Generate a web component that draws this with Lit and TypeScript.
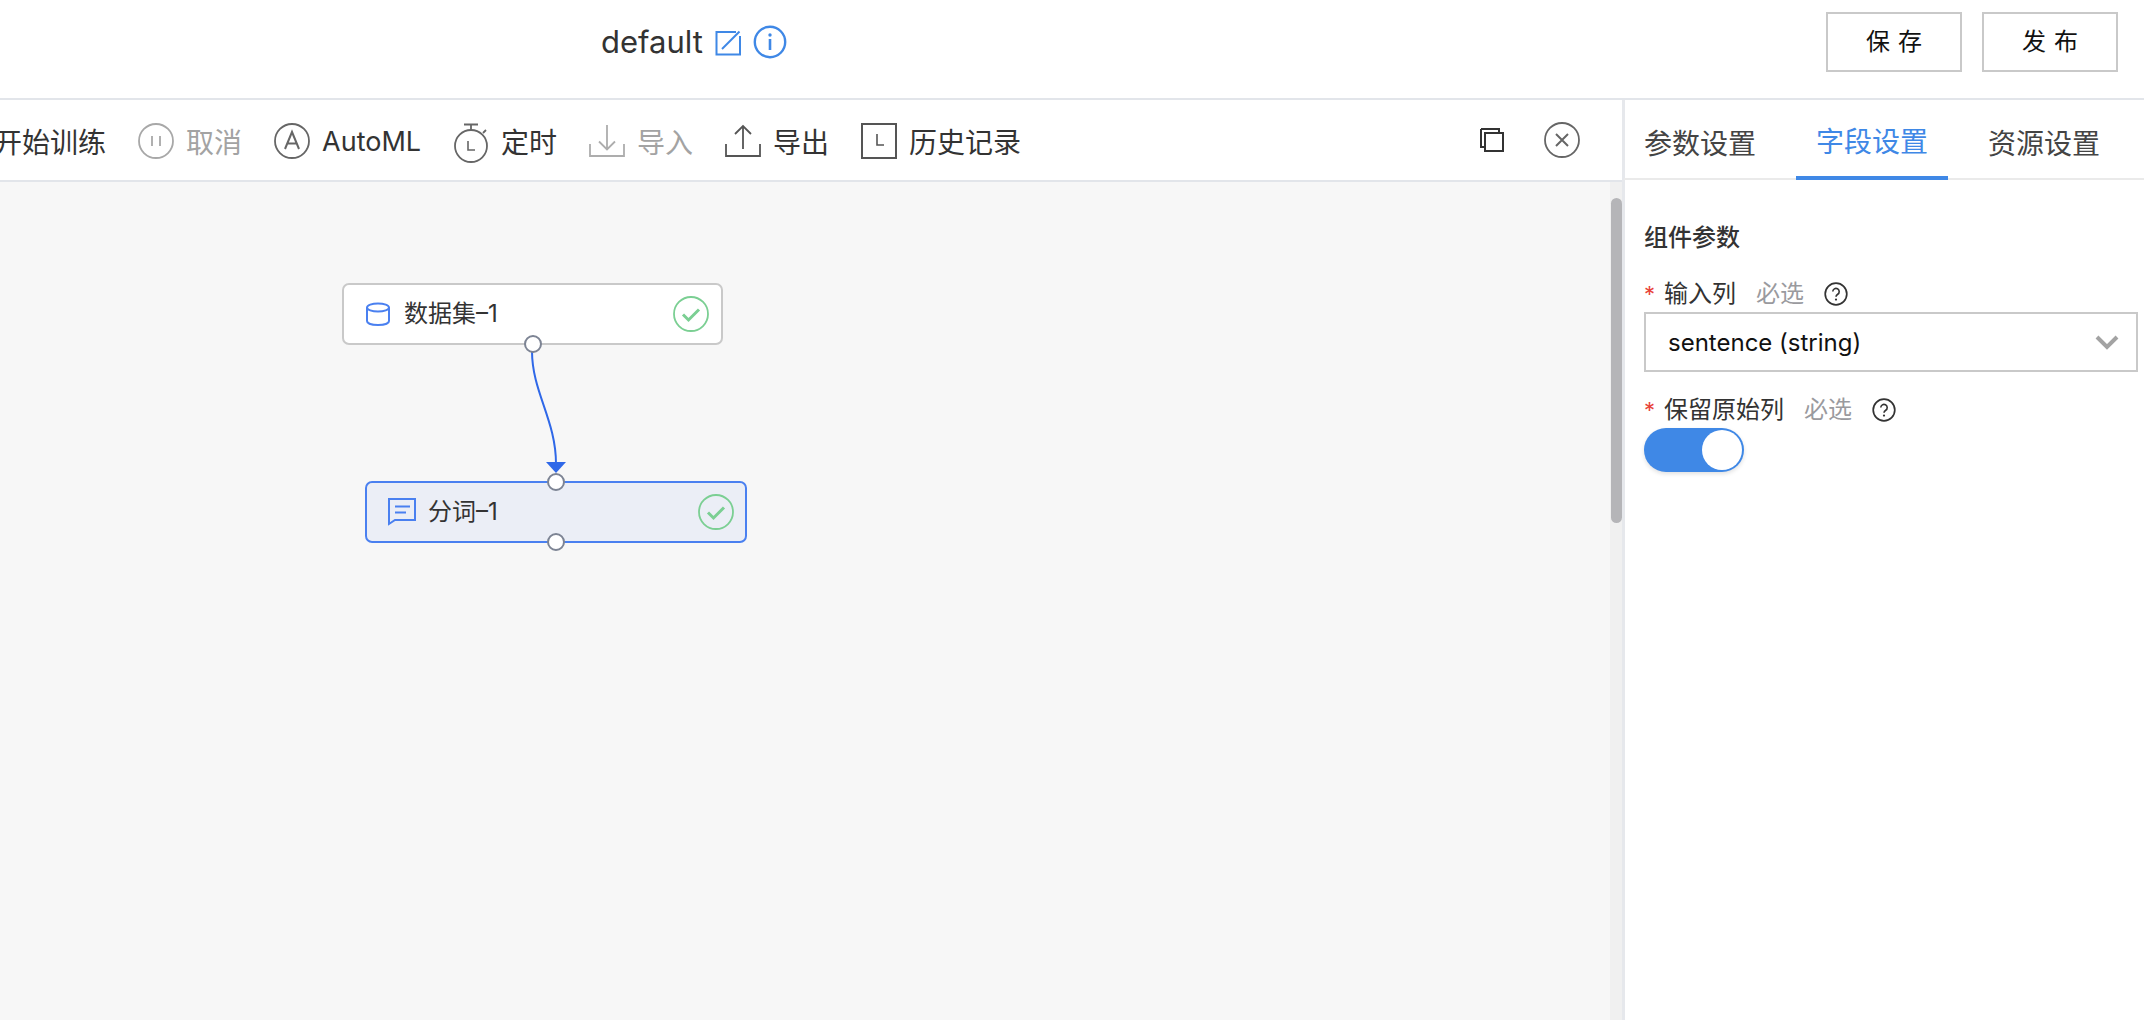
import { LitElement, html, css, svg } from "lit";
import { customElement } from "lit/decorators.js";

const check = svg`<svg class="check" viewBox="0 0 36 36"><circle cx="18" cy="18" r="17" fill="none" stroke="#7bcf93" stroke-width="1.8"/><path d="M10 18.500l5.500 5.500 10.500-10.500" fill="none" stroke="#7bcf93" stroke-width="3"/></svg>`;
const help = svg`<svg class="help" viewBox="0 0 24 24"><circle cx="12" cy="12" r="10.8" fill="none" stroke="#333" stroke-width="1.7"/><path d="M8.8 9.6a3.2 3.2 0 1 1 4.9 2.7c-1.100.7-1.700 1.200-1.700 2.500" fill="none" stroke="#333" stroke-width="1.600"/><circle cx="12" cy="17.600" r="1.100" fill="#333"/></svg>`;

@customElement("app-root")
export class AppRoot extends LitElement {
  static styles = css`
    :host { display: block; width: 2144px; height: 1020px; overflow: hidden; background: #fff; color: #333; font-family: Inter, "Noto Sans CJK SC", sans-serif; }
    .header { height: 84px; padding: 0 26px 14px 601px; border-bottom: 2px solid #e2e5ea; display: flex; align-items: center; }
    .title { font-size: 31px; color: #333; margin-right: 12px; padding-bottom: 2px; }
    .edit { width: 26px; height: 26px; margin-right: 12px; margin-top: 2px; }
    .info { width: 34px; height: 34px; margin-top: -1px; }
    .actions { margin-left: auto; display: flex; gap: 20px; }
    .btn { width: 136px; height: 60px; box-sizing: border-box; border: 2px solid #c9c9c9; padding-bottom: 5px; display: flex; align-items: center; justify-content: center; font-size: 24px; letter-spacing: 8px; text-indent: 8px; color: #111; background: #fff; }
    .body { display: flex; height: 920px; }
    .left { width: 1622px; display: flex; flex-direction: column; }
    .toolbar { height: 80px; border-bottom: 2px solid #e2e5ea; display: flex; align-items: center; font-size: 28px; color: #333; }
    .tools { display: flex; align-items: center; gap: 32px; margin-left: -6px; padding-top: 2px; }
    .tool { display: flex; align-items: center; gap: 12px; }
    .tool.off { color: #a3a3a3; }
    .tool svg { width: 36px; height: 36px; flex: none; }
    .tool.timer svg { height: 40px; margin-top: 4px; }
    .latin { font-size: 27px; }
    .tool-right { margin-left: auto; display: flex; align-items: center; gap: 40px; padding-right: 42px; }
    .tool-right svg { display: block; }
    .copy { width: 24px; height: 24px; }
    .close { width: 36px; height: 36px; }
    .canvas { flex: 1; position: relative; background: #f7f7f7; overflow: hidden; }
    .track { position: absolute; right: 0; top: 0; bottom: 0; width: 12px; background: #f0f0f0; }
    .thumb { position: absolute; left: 1px; right: 0; top: 16px; height: 325px; border-radius: 6px; background: #b5b5b8; }
    .link { position: absolute; left: 0; top: 0; width: 800px; height: 500px; }
    .node { position: absolute; height: 62px; box-sizing: border-box; border-radius: 7px; border: 2px solid #c9c9c9; background: #fff; display: flex; align-items: center; font-size: 24px; color: #333; }
    .node.sel { border-color: #4a80f0; background: #ebeef6; }
    .node .ic { flex: none; margin-left: 22px; margin-right: 14px; }
    .node .ic.chat { margin-left: 21px; margin-right: 12px; }
    .node .txt { padding-bottom: 6px; }
    .n1 { left: 342px; top: 101px; width: 381px; }
    .n2 { left: 365px; top: 299px; width: 382px; }
    .check { width: 36px; height: 36px; margin-left: auto; margin-right: 11px; flex: none; }
    .port { position: absolute; width: 14px; height: 14px; left: 180px; border: 2px solid #7d8494; border-radius: 50%; background: #fff; z-index: 1; }
    .n1 .check { margin-right: 12px; margin-top: -1px; }
    .port.top { top: -10px; }
    .port.bot { bottom: -10px; }
    .right { flex: 1; border-left: 3px solid #e6e8ec; }
    .tabs { height: 80px; box-sizing: border-box; border-bottom: 2px solid #eaeaea; display: flex; gap: 20px; font-size: 28px; color: #444; margin-left: -1px; }
    .tab { width: 152px; height: 80px; display: flex; align-items: center; justify-content: center; box-sizing: border-box; padding-top: 4px; white-space: nowrap; }
    .tab.on { color: #3f88e6; border-bottom: 4px solid #3f88e6; padding-top: 4px; }
    .panel { padding: 0 6px 0 19px; }
    .section { font-size: 24px; font-weight: 500; color: #333; line-height: 34px; margin-top: 41px; }
    .label { display: flex; align-items: center; font-size: 24px; line-height: 34px; color: #333; }
    .star { color: #e8433a; width: 20px; font-size: 22px; margin-left: 0; }
    .opt { color: #9a9a9e; margin-left: 20px; }
    .help { width: 24px; height: 24px; margin-left: 20px; }
    .l1 { margin-top: 22px; }
    .select { height: 60px; box-sizing: border-box; border: 2px solid #c9c9c9; margin-top: 1px; display: flex; align-items: center; padding: 0 17px 0 22px; font-size: 24px; color: #111; }
    .select svg { width: 24px; height: 16px; margin-left: auto; }
    .l2 { margin-top: 21px; }
    .switch { width: 100px; height: 44px; border-radius: 22px; background: #3f88e6; margin-top: 1px; display: flex; justify-content: flex-end; align-items: center; padding-right: 2px; box-sizing: border-box; box-shadow: 0 2px 4px rgba(0,0,0,.12); }
    .knob { width: 40px; height: 40px; border-radius: 50%; background: #fff; }
  `;

  render() {
    return html`
      <div class="header">
        <span class="title">default</span>
        <svg class="edit" viewBox="0 0 26 26" fill="none" stroke="#3f88e6" stroke-width="2"><path d="M21 2H1.500v22.500H25V6"/><path d="M7 19L24.500 1.500"/></svg>
        <svg class="info" viewBox="0 0 34 34" fill="none" stroke="#3f88e6"><circle cx="17" cy="17" r="15.200" stroke-width="2.400"/><path d="M17 14v11" stroke-width="2.600"/><circle cx="17" cy="10" r="1.700" fill="#3f88e6" stroke="none"/></svg>
        <div class="actions"><div class="btn">保存</div><div class="btn">发布</div></div>
      </div>
      <div class="body">
        <div class="left">
          <div class="toolbar">
            <div class="tools">
            <div class="tool"><span>开始训练</span></div>
            <div class="tool off">
              <svg viewBox="0 0 36 36" fill="none" stroke="#a8a8a8"><circle cx="18" cy="18" r="17" stroke-width="1.800"/><path d="M14 13v10M22 13v10" stroke-width="1.800"/></svg><span>取消</span>
            </div>
            <div class="tool">
              <svg viewBox="0 0 36 36" fill="none" stroke="#666"><circle cx="18" cy="18" r="17" stroke-width="1.800"/><path d="M11 26l7-17 7 17M13.500 20.500h9" stroke-width="2"/></svg><span class="latin">AutoML</span>
            </div>
            <div class="tool timer">
              <svg viewBox="0 0 36 40" fill="none" stroke="#666" stroke-width="1.800"><circle cx="18" cy="23" r="16"/><path d="M11 1.500h14M18 1.500V7M30 10l3-3"/><path d="M15 18v9h7" stroke-width="1.600"/></svg><span>定时</span>
            </div>
            <div class="tool off">
              <svg viewBox="0 0 36 36" fill="none" stroke="#adadad" stroke-width="1.800"><path d="M1 21v12h34V21"/><path d="M18 2v24M10 18.500l8 8 8-8"/></svg><span>导入</span>
            </div>
            <div class="tool">
              <svg viewBox="0 0 36 36" fill="none" stroke="#555" stroke-width="1.800"><path d="M1 21v12h34V21"/><path d="M18 26V3M10 11l8-8 8 8"/></svg><span>导出</span>
            </div>
            <div class="tool">
              <svg viewBox="0 0 36 36" fill="none" stroke="#555" stroke-width="2"><rect x="1" y="1" width="34" height="34"/><path d="M16 11v11h7" stroke-width="1.600"/></svg><span>历史记录</span>
            </div>
            </div>
            <div class="tool-right">
              <svg class="copy" viewBox="0 0 24 24" fill="none" stroke="#333" stroke-width="2"><rect x="5" y="5" width="18" height="18"/><path d="M1 1h18v4M1 1v18h4"/></svg>
              <svg class="close" viewBox="0 0 36 36" fill="none" stroke="#666"><circle cx="18" cy="18" r="17" stroke-width="1.800"/><path d="M12 12l12 12M24 12L12 24" stroke-width="2"/></svg>
            </div>
          </div>
          <div class="canvas">
            <svg class="link" viewBox="0 182 800 500">
              <path d="M532 351C532 392 556 420 556 464" fill="none" stroke="#2f68e8" stroke-width="2"/>
              <path d="M546 462h20l-10 11z" fill="#2f68e8"/>
            </svg>
            <div class="node n1">
              <svg class="ic" width="24" height="24" viewBox="0 0 24 24" fill="none" stroke="#4a80f0" stroke-width="2"><ellipse cx="12" cy="5.500" rx="11" ry="4"/><path d="M1 5.500V19c0 2.500 5 4 11 4s11-1.500 11-4V5.500"/></svg>
              <span class="txt">数据集–1</span>${check}
              <i class="port bot"></i>
            </div>
            <div class="node n2 sel">
              <svg class="ic chat" width="28" height="28" viewBox="0 0 28 28" fill="none" stroke="#4a80f0" stroke-width="2"><path d="M1 1h26v21H7l-6 4z"/><path d="M7 8.500h15M7 14.500h11"/></svg>
              <span class="txt">分词–1</span>${check}
              <i class="port top"></i><i class="port bot"></i>
            </div>
            <div class="track"><div class="thumb"></div></div>
          </div>
        </div>
        <div class="right">
          <div class="tabs"><div class="tab">参数设置</div><div class="tab on">字段设置</div><div class="tab">资源设置</div></div>
          <div class="panel">
            <div class="section">组件参数</div>
            <div class="label l1"><span class="star">*</span><span>输入列</span><span class="opt">必选</span>${help}</div>
            <div class="select"><span>sentence (string)</span>
              <svg viewBox="0 0 24 16" fill="none" stroke="#a3a3a3" stroke-width="4"><path d="M2 3l10 10L22 3"/></svg>
            </div>
            <div class="label l2"><span class="star">*</span><span>保留原始列</span><span class="opt">必选</span>${help}</div>
            <div class="switch"><div class="knob"></div></div>
          </div>
        </div>
      </div>
    `;
  }
}
